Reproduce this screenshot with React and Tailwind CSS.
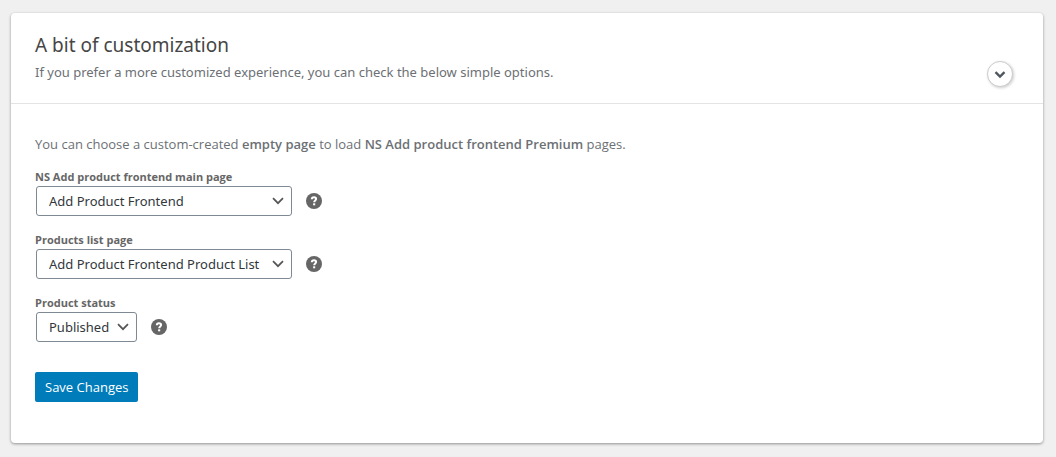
import React, { useState } from 'react';

const FIELDS = [
  {
    id: 'main-page',
    label: 'NS Add product frontend main page',
    options: ['Add Product Frontend'],
    width: 'w-64',
  },
  {
    id: 'list-page',
    label: 'Products list page',
    options: ['Add Product Frontend Product List'],
    width: 'w-64',
  },
  {
    id: 'status',
    label: 'Product status',
    options: ['Published', 'Pending', 'Draft'],
    width: 'w-[101px]',
  },
];

function HelpTip({ label }) {
  return (
    <button type="button" aria-label={`Help: ${label}`} className="block h-4 w-4">
      <svg viewBox="0 0 16 16" className="h-4 w-4" aria-hidden="true">
        <circle cx="8" cy="8" r="8" fill="#666" />
        <path d="M5.8 6.2C5.8 4.8 6.8 4.3 8 4.3s2.1.6 2.1 1.7c0 1.4-1.9 1.5-1.9 3.2" fill="none" stroke="#fff" strokeWidth="2" />
        <rect x="7.1" y="10.3" width="2.1" height="2" fill="#fff" />
      </svg>
    </button>
  );
}

function SelectField({ id, label, options, width }) {
  return (
    <div>
      <label htmlFor={id} className="block pb-px text-[11px] leading-4 font-bold text-[#666]">
        {label}
      </label>
      <div className="ml-px flex items-center gap-[14px]">
        <div className={`grid items-center ${width}`}>
          <select
            id={id}
            className="col-start-1 row-start-1 h-[30px] w-full appearance-none rounded-[3px] border border-[#7e8993] bg-white pt-[2px] pl-3 pr-6 font-['Noto_Sans',sans-serif] text-[13px] text-[#32373c]"
          >
            {options.map((option) => (
              <option key={option}>{option}</option>
            ))}
          </select>
          <svg
            viewBox="0 0 12 8"
            className="pointer-events-none col-start-1 row-start-1 mr-2 h-2 w-3 justify-self-end"
            aria-hidden="true"
          >
            <path d="M1 1.2l5 5 5-5" fill="none" stroke="#555" strokeWidth="1.7" />
          </svg>
        </div>
        <HelpTip label={label} />
      </div>
    </div>
  );
}

function App() {
  const [open, setOpen] = useState(true);

  return (
    <div className="min-h-screen bg-[#f0f0f0] pt-[13px] pr-[13px] pb-[14px] pl-[11px] font-['Noto_Sans',sans-serif] text-[13px] text-[#6c7075]">
      <section className="rounded-[4px] bg-white shadow-[0_1px_3px_rgba(0,0,0,0.4)]">
        <header className="flex items-end justify-between border-b border-[#e2e4e4] pt-[19px] pr-[30px] pb-4 pl-6">
          <div className="pb-[3px]">
            <h2 className="text-[19px] leading-[26px] text-[#464646]">A bit of customization</h2>
            <p className="mt-[3px] leading-[23px]">
              If you prefer a more customized experience, you can check the below simple options.
            </p>
          </div>
          <button
            type="button"
            aria-label="Toggle options"
            aria-expanded={open}
            onClick={() => setOpen(!open)}
            className="flex h-[26px] w-[26px] items-center justify-center rounded-full border border-[#ccc] bg-white shadow-[1px_1px_3px_rgba(0,0,0,0.2)]"
          >
            <svg viewBox="0 0 12 8" className="mt-[2px] h-2 w-3" aria-hidden="true">
              <path d="M1.5 1.2L6 5.5l4.5-4.3" fill="none" stroke="#50575e" strokeWidth="2.4" />
            </svg>
          </button>
        </header>
        {open && (
          <form className="px-6 pt-[30px] pb-[41px] font-['Open_Sans',sans-serif]" onSubmit={(e) => e.preventDefault()}>
            <p className="leading-5">
              You can choose a custom-created <strong className="font-semibold">empty page</strong> to load{' '}
              <strong className="font-semibold">NS Add product frontend Premium</strong> pages.
            </p>
            <div className="mt-[15px] flex flex-col gap-4">
              {FIELDS.map((field) => (
                <SelectField key={field.id} {...field} />
              ))}
            </div>
            <button
              type="submit"
              className="mt-[30px] block h-[30px] rounded-[2px] bg-[#007cba] px-[10px] pt-[2px] text-[13px] text-white"
            >
              Save Changes
            </button>
          </form>
        )}
      </section>
    </div>
  );
}

export default App;
